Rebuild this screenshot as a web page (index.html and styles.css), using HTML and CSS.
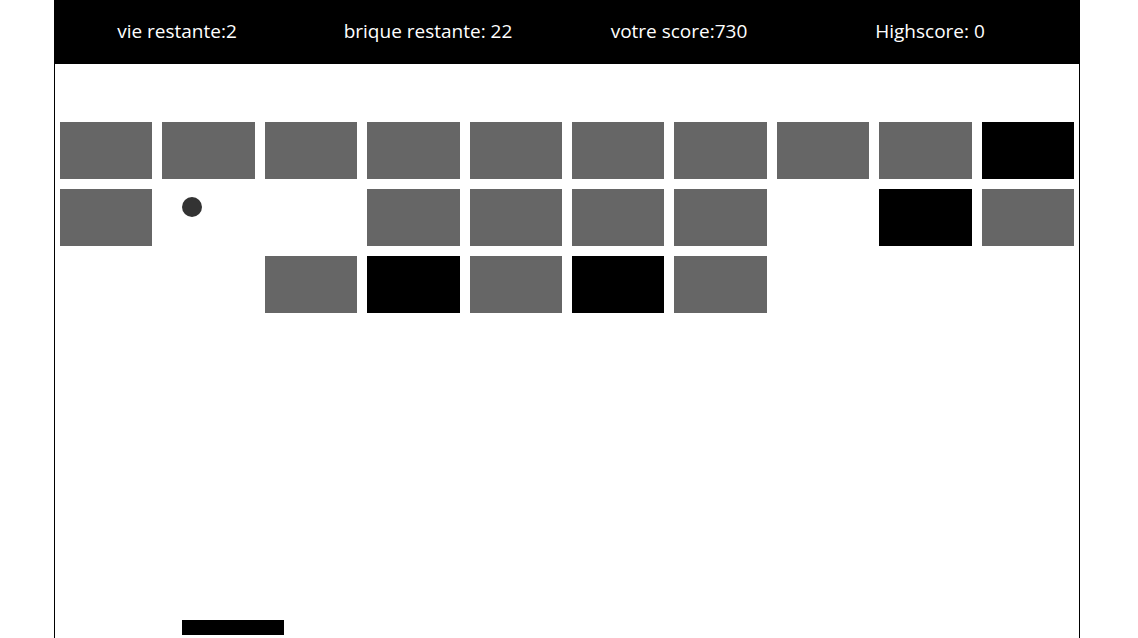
FILE: index.html
```html
<!DOCTYPE html>
<html lang="fr">
<head>
    <meta charset="UTF-8">
    <meta name="viewport" content="width=device-width, initial-scale=1.0">
    <title>Casse-briques</title>
    <link rel="stylesheet" href="styles.css">
</head>
<body>
    <div class="game">
        <header class="stats">
            <span>vie restante:2</span>
            <span>brique restante: 22</span>
            <span>votre score:730</span>
            <span>Highscore: 0</span>
        </header>

        <div class="board">
            <div class="bricks">
                <!-- ligne 1 -->
                <div class="brick"></div>
                <div class="brick"></div>
                <div class="brick"></div>
                <div class="brick"></div>
                <div class="brick"></div>
                <div class="brick"></div>
                <div class="brick"></div>
                <div class="brick"></div>
                <div class="brick"></div>
                <div class="brick hard"></div>
                <!-- ligne 2 -->
                <div class="brick"></div>
                <div class="brick gone"></div>
                <div class="brick gone"></div>
                <div class="brick"></div>
                <div class="brick"></div>
                <div class="brick"></div>
                <div class="brick"></div>
                <div class="brick gone"></div>
                <div class="brick hard"></div>
                <div class="brick"></div>
                <!-- ligne 3 -->
                <div class="brick gone"></div>
                <div class="brick gone"></div>
                <div class="brick"></div>
                <div class="brick hard"></div>
                <div class="brick"></div>
                <div class="brick hard"></div>
                <div class="brick"></div>
                <div class="brick gone"></div>
                <div class="brick gone"></div>
                <div class="brick gone"></div>
            </div>

            <div class="ball"></div>
            <div class="paddle"></div>
        </div>
    </div>
</body>
</html>
```

FILE: styles.css
```css
* {
    margin: 0;
    padding: 0;
    box-sizing: border-box;
}

body {
    font-family: "Open Sans", sans-serif;
    background: #fff;
    height: 100vh;
    overflow: hidden;
}

/* Zone de jeu */
.game {
    width: 1026px;
    height: 100%;
    margin-left: 54px;
    border-left: 1px solid #000;
    border-right: 1px solid #000;
    display: flex;
    flex-direction: column;
}

/* Barre du haut */
.stats {
    height: 64px;
    flex-shrink: 0;
    background: #000;
    color: #fff;
    font-size: 19px;
    display: grid;
    grid-template-columns: repeat(4, 251px);
    align-items: center;
    padding-bottom: 2px;
}

.stats span {
    text-align: center;
    padding-right: 7px;
}

/* Plateau */
.board {
    position: relative;
    flex: 1;
}

.bricks {
    display: grid;
    grid-template-columns: repeat(10, 1fr);
    grid-auto-rows: 57px;
    column-gap: 10px;
    row-gap: 10px;
    padding: 58px 5px 0;
}

.brick {
    background: #666;
}

.brick.hard {
    background: #000;
}

.brick.gone {
    background: transparent;
}

.ball {
    position: absolute;
    left: 127px;
    top: 133px;
    width: 20px;
    height: 20px;
    border-radius: 50%;
    background: #333;
}

.paddle {
    position: absolute;
    left: 127px;
    top: 556px;
    width: 102px;
    height: 15px;
    background: #000;
}
```
